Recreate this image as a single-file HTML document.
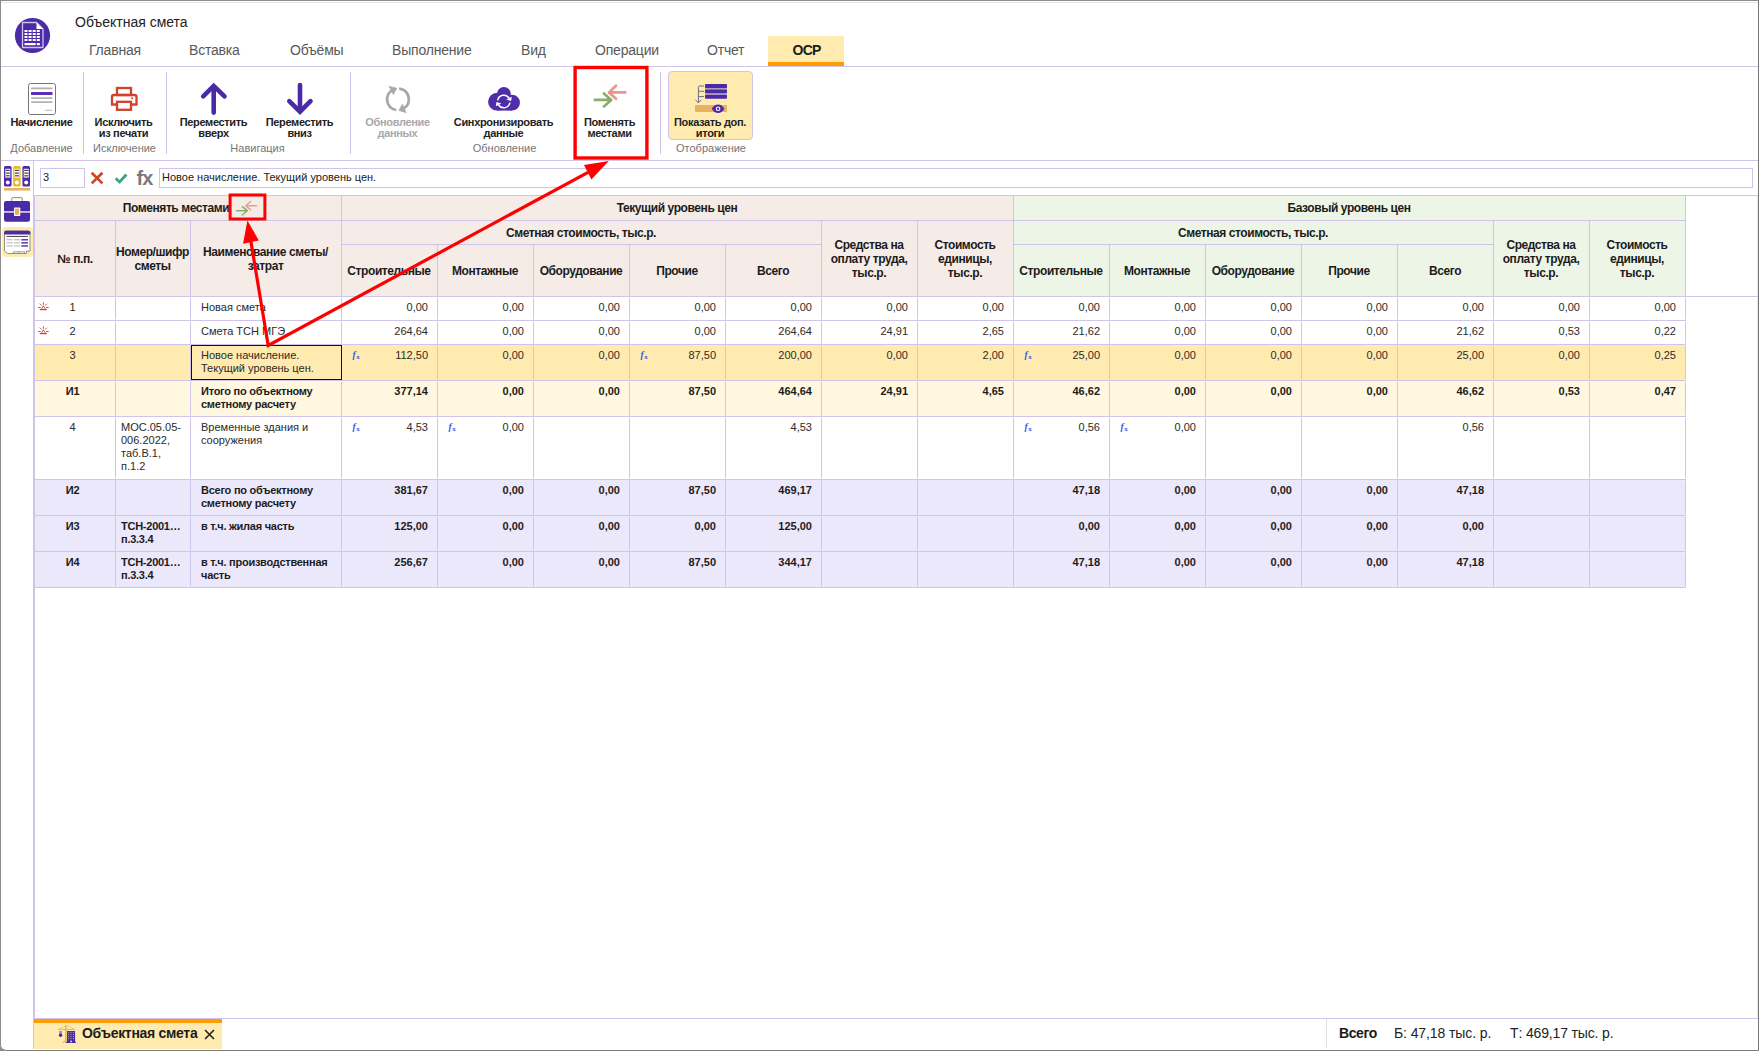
<!DOCTYPE html>
<html lang="ru"><head><meta charset="utf-8"><title>Объектная смета</title>
<style>
*{box-sizing:border-box;margin:0;padding:0}
html,body{width:1759px;height:1051px;overflow:hidden;background:#fff}
body{font-family:"Liberation Sans",sans-serif;color:#1a1a1a;position:relative}
.abs{position:absolute}
.win{position:absolute;left:0;top:0;width:1759px;height:1051px;border:1px solid #8c8c8c;border-right-color:#767676;border-bottom-color:#7c7c7c;border-radius:0 0 0 6px;pointer-events:none;z-index:50}
.hl{position:absolute;height:1px;background:#d0c4ea}
.vl{position:absolute;width:1px;background:#d0c4ea}
.title{position:absolute;left:75px;top:13px;font-size:14px;line-height:18px;color:#222;white-space:nowrap}
.tab{position:absolute;top:41px;font-size:14px;line-height:18px;color:#585858;white-space:nowrap;letter-spacing:-0.2px}
.tabsel{position:absolute;left:768px;top:36px;width:76px;height:30px;background:#ffebaf;border-bottom:4px solid #ff9d00}
.rb{position:absolute;font-size:11px;line-height:11px;font-weight:700;text-align:center;white-space:nowrap;color:#222;letter-spacing:-0.35px;transform:translateX(-50%)}
.rb.dis{color:#a8a8a8}
.rg{position:absolute;font-size:11px;line-height:12px;color:#757575;white-space:nowrap;transform:translateX(-50%)}
.cell{position:absolute;overflow:hidden;font-size:11px;line-height:13px;white-space:nowrap}
.hc{position:absolute;font-size:12px;line-height:14px;font-weight:700;text-align:center;letter-spacing:-0.42px;color:#1c1c1c;display:flex;align-items:center;justify-content:center;white-space:nowrap}
.num{position:absolute;font-size:11px;line-height:13px;text-align:right;white-space:nowrap;color:#2a2a2a}
.txt{position:absolute;font-size:11px;line-height:13px;white-space:nowrap;color:#2a2a2a}
.fxi{position:absolute;font-family:"Liberation Serif",serif;font-weight:700;font-style:italic;color:#2a5cf0;font-size:9.500px;line-height:9px;white-space:nowrap}
.fxi span{font-size:7px;font-style:normal;position:relative;top:1px;left:0.5px}
.b{font-weight:700;letter-spacing:-0.25px;color:#1c1c1c}
.bn{font-weight:700;color:#1c1c1c}
</style></head>
<body>
<div class="hl" style="left:1px;top:2px;width:1757px;background:#e4e4e4"></div>
<svg class="abs" style="left:14px;top:17px" width="37" height="37" viewBox="0 0 37 37">
<circle cx="18.5" cy="18.5" r="17.6" fill="#4b2aa5"/>
<path d="M8.5 5.5h14l6.5 6.5v18.5h-20.5z" fill="#4b2aa5" stroke="#cfc3ee" stroke-width="1.3" stroke-linejoin="round"/>
<path d="M22.5 5.5l6.5 6.500h-6.5z" fill="#fff"/>
<g fill="#fff">
<rect x="10.5" y="13" width="3" height="2"/><rect x="14.6" y="13" width="3" height="2"/><rect x="18.7" y="13" width="3" height="2"/><rect x="22.8" y="13" width="3" height="2"/>
<rect x="10.5" y="16" width="3" height="2"/><rect x="14.6" y="16" width="3" height="2"/><rect x="18.700" y="16" width="3" height="2"/><rect x="22.8" y="16" width="3" height="2"/>
<rect x="10.5" y="19" width="3" height="2"/><rect x="14.6" y="19" width="3" height="2"/><rect x="18.7" y="19" width="3" height="2"/><rect x="22.8" y="19" width="3" height="2"/>
<rect x="10.5" y="22" width="3" height="2"/><rect x="14.6" y="22" width="3" height="2"/><rect x="18.7" y="22" width="3" height="2"/><rect x="22.8" y="22" width="3" height="2"/>
<rect x="10.5" y="26" width="11.2" height="2.200"/><rect x="22.8" y="26" width="3" height="2.2"/>
</g></svg>
<div class="title">Объектная смета</div>
<div class="tabsel"></div>
<div class="tab" style="left:89px">Главная</div>
<div class="tab" style="left:189px">Вставка</div>
<div class="tab" style="left:290px">Объёмы</div>
<div class="tab" style="left:392px">Выполнение</div>
<div class="tab" style="left:521px">Вид</div>
<div class="tab" style="left:595px">Операции</div>
<div class="tab" style="left:707px">Отчет</div>
<div class="tab" style="left:792.500px;font-weight:700;color:#1c1c1c;letter-spacing:-0.7px">ОСР</div>
<div class="hl" style="left:1px;top:66px;width:1757px;background:#d0c4ea"></div>
<div class="hl" style="left:1px;top:160px;width:1757px;background:#d0c4ea"></div>
<div class="vl" style="left:83px;top:72px;height:82px;background:#d0c4ea"></div>
<div class="vl" style="left:166px;top:72px;height:82px;background:#d0c4ea"></div>
<div class="vl" style="left:350px;top:72px;height:82px;background:#d0c4ea"></div>
<div class="vl" style="left:660px;top:72px;height:82px;background:#d0c4ea"></div>
<div class="abs" style="left:668px;top:71px;width:85px;height:69px;background:#ffebaf;border:1px solid #d0c4ea;border-radius:4px"></div>
<div class="rb" style="left:41.5px;top:117px">Начисление</div>
<div class="rb" style="left:123.5px;top:117px">Исключить<br>из печати</div>
<div class="rb" style="left:213.5px;top:117px">Переместить<br>вверх</div>
<div class="rb" style="left:299.5px;top:117px">Переместить<br>вниз</div>
<div class="rb dis" style="left:397.5px;top:117px">Обновление<br>данных</div>
<div class="rb" style="left:503.5px;top:117px">Синхронизировать<br>данные</div>
<div class="rb" style="left:609.5px;top:117px">Поменять<br>местами</div>
<div class="rb" style="left:710px;top:117px">Показать доп.<br>итоги</div>
<div class="rg" style="left:41.5px;top:142px">Добавление</div>
<div class="rg" style="left:124.5px;top:142px">Исключение</div>
<div class="rg" style="left:257.5px;top:142px">Навигация</div>
<div class="rg" style="left:504.5px;top:142px">Обновление</div>
<div class="rg" style="left:711px;top:142px">Отображение</div>
<svg class="abs" style="left:0;top:66px" width="800" height="94" viewBox="0 66 800 94">
<!-- Начисление -->
<rect x="28.5" y="83.500" width="27" height="31" rx="2.2" fill="#fff" stroke="#777" stroke-width="1"/>
<rect x="31" y="87.4" width="21.5" height="1.900" rx=".9" fill="#b0b3b0"/>
<rect x="31" y="92" width="21.5" height="3" rx=".5" fill="#5b2fb5"/>
<rect x="31" y="97.2" width="21.5" height="1.900" rx=".9" fill="#b0b3b0"/>
<rect x="31" y="101.2" width="21.5" height="1.900" rx=".9" fill="#b0b3b0"/>
<rect x="45" y="109.7" width="7.500" height="1.1" rx=".5" fill="#b4b6b4"/>
<!-- printer -->
<g fill="none" stroke="#d0432a" stroke-width="2.300">
<rect x="117" y="88" width="14" height="7"/>
<path d="M117 104.500h-5v-7.500q0-2 2-2h20.5q2 0 2 2v7.5h-5.500"/>
<rect x="117" y="101.800" width="14" height="8" fill="#fff"/>
</g>
<circle cx="132.200" cy="98.3" r="1" fill="#d0432a"/>
<!-- arrows -->
<g fill="none" stroke="#4b2aa5" stroke-width="4.600" stroke-linecap="round" stroke-linejoin="miter">
<path d="M213.700 112.600V88"/><path d="M203.200 96.400L213.700 85.900L224.500 96.400"/>
<path d="M300 85V109"/><path d="M289.300 101.200L300 111.700L310.500 101.200"/>
</g>
<!-- refresh grey -->
<g fill="none" stroke="#a8a8a8" stroke-width="2.700">
<path d="M396.300 110A10.800 10.800 0 0 1 392.300 90.100"/>
<path d="M399.200 88.600A10.800 10.800 0 0 1 403.900 108.400"/>
</g>
<path d="M389 86.300L396.900 88.200L393.300 94.600Z" fill="#a8a8a8" stroke="#a8a8a8" stroke-width=".6" stroke-linejoin="round"/>
<path d="M398.900 110.400L402.400 104.100L406.200 112.700Z" fill="#a8a8a8" stroke="#a8a8a8" stroke-width=".6" stroke-linejoin="round"/>
<!-- cloud -->
<g fill="#4f2ca8">
<circle cx="503.900" cy="93.800" r="6.900"/><circle cx="497" cy="101.700" r="8.900"/><circle cx="512" cy="102.700" r="7.900"/>
<rect x="497" y="100" width="15" height="10.600"/>
</g>
<g fill="none" stroke="#fff" stroke-width="1.500">
<path d="M497.700 100.400A6.200 6.200 0 0 1 509.200 98.400"/>
<path d="M509.900 102.600A6.200 6.200 0 0 1 498.400 104.600"/>
</g>
<path d="M511.700 96.800L511.200 101L506.200 99.500Z" fill="#fff"/>
<path d="M495.900 106.200L496.400 102L501.400 103.500Z" fill="#fff"/>
<!-- swap -->
<g fill="none" stroke-width="2.700" stroke-linecap="round" stroke-linejoin="round">
<path d="M625.300 92.400H609.500M616 85.800L609 92.400L616 98.800" stroke="#e8988b"/>
<path d="M594.800 99.900H611M603.900 93.400L611.200 99.900L603.900 106.400" stroke="#86b06a"/>
</g>
</svg>
<svg class="abs" style="left:690px;top:80px;z-index:3" width="42" height="36" viewBox="690 80 42 36">
<rect x="705" y="84" width="22" height="4.200" rx="1" fill="#4b2aa5"/>
<rect x="705" y="89.300" width="22" height="4.200" rx="1" fill="#4b2aa5"/>
<rect x="705" y="94.600" width="22" height="4.200" rx="1" fill="#4b2aa5"/>
<rect x="705" y="88.200" width="22" height="1.100" fill="#a893c8"/><rect x="705" y="93.500" width="22" height="1.100" fill="#a893c8"/>
<g fill="none" stroke="#6b6c85" stroke-width="1">
<path d="M704 86h-4.200q-1.400 0 -1.400 1.400V102.600M698.400 91.300H704M698.400 96.600H704M695.400 99.800L698.400 102.800L701.400 99.800"/>
</g>
<rect x="695" y="105" width="32" height="7" rx="1" fill="#e8b264"/>
<path d="M711.800 108.700C714.500 103 721.600 103 724.400 108.700C721.600 114.400 714.500 114.400 711.800 108.700z" fill="#4b2aa5"/>
<circle cx="718.100" cy="108.700" r="2.300" fill="#fff"/><circle cx="718.100" cy="108.700" r="1.200" fill="#4b2aa5"/>
</svg>

<div class="vl" style="left:33px;top:160px;height:889px;background:#d0c4ea"></div>
<div class="abs" style="left:1.500px;top:227px;width:31.500px;height:30px;background:#ffebaf;border-radius:4px"></div>
<svg class="abs" style="left:0;top:162px" width="34" height="96" viewBox="0 162 34 96">
<!-- binders -->
<g>
<rect x="4" y="166" width="7.600" height="20.600" rx="1.600" fill="#4b2aa5"/>
<rect x="13.100" y="166" width="7.600" height="20.600" rx="1.600" fill="#e8b92e"/>
<rect x="22.400" y="166" width="7.600" height="20.600" rx="1.600" fill="#4b2aa5"/>
<g fill="#fff"><rect x="5.300" y="168.800" width="5" height="8.800"/><rect x="14.400" y="168.800" width="5" height="8.800"/><rect x="23.700" y="168.800" width="5" height="8.800"/>
<circle cx="7.800" cy="182.600" r="2"/><circle cx="16.900" cy="182.600" r="2"/><circle cx="26.200" cy="182.600" r="2"/></g>
<g fill="#444"><rect x="5.800" y="169.800" width="4" height="1.200"/><rect x="5.800" y="172.500" width="4" height="1.200"/><rect x="5.800" y="175.200" width="4" height="1.200"/>
<rect x="14.900" y="169.800" width="4" height="1.200"/><rect x="14.900" y="172.500" width="4" height="1.200"/><rect x="14.900" y="175.200" width="4" height="1.200"/>
<rect x="24.200" y="169.800" width="4" height="1.200"/><rect x="24.200" y="172.500" width="4" height="1.200"/><rect x="24.200" y="175.200" width="4" height="1.200"/></g>
<rect x="4" y="188" width="26" height="2.600" fill="#e8b264"/>
</g>
<!-- briefcase -->
<path d="M11.700 201v-2.200q0 -1.200 1.200 -1.200h8.200q1.200 0 1.200 1.200v2.200" fill="none" stroke="#8a8a8a" stroke-width="1"/>
<rect x="4" y="201" width="26" height="20.800" rx="2" fill="#4b2aa5"/>
<rect x="4" y="211.300" width="26" height="1.300" fill="#fff"/>
<rect x="14" y="207.400" width="6.300" height="8.600" rx=".8" fill="#fff"/>
<rect x="15" y="208.600" width="4.200" height="6.300" fill="#e8b264"/>
<!-- table window -->
<path d="M4.500 232.500q0 -1.500 1.500 -1.500h22.500q1.500 0 1.500 1.500v18.500h-3.500v2.500h-19l-3 -2.500z" fill="#fff" stroke="#777" stroke-width=".8"/>
<path d="M4.200 234.500v-2.200q0 -1.500 1.500 -1.500h23q1.500 0 1.500 1.500v2.200z" fill="#4b2aa5"/>
<rect x="6.500" y="235.900" width="21.500" height="1.100" fill="#555"/>
<g fill="#b8b8b8"><rect x="6.500" y="239.200" width="6" height="1.100"/><rect x="14" y="239.200" width="6" height="1.100"/><rect x="6.500" y="242.300" width="6" height="1.100"/><rect x="14" y="242.300" width="6" height="1.100"/><rect x="6.500" y="245.400" width="6" height="1.100"/><rect x="14" y="245.400" width="6" height="1.100"/></g>
<g fill="#5b3ab5"><rect x="21.300" y="239" width="6.700" height="1.500"/><rect x="21.300" y="242.100" width="6.700" height="1.500"/><rect x="21.300" y="245.200" width="6.700" height="1.500"/></g>
<path d="M13.500 253.500v-1.700h11v1.700M19 251.800v1.700" fill="none" stroke="#888" stroke-width=".8"/>
</svg>

<div class="abs" style="left:40px;top:168px;width:45px;height:20px;background:#fff;border:1px solid #d0c4ea"></div>
<div class="txt" style="left:43px;top:171px;color:#1a1a1a">3</div>
<div class="abs" style="left:159px;top:168px;width:1594px;height:20px;background:#fff;border:1px solid #d0c4ea"></div>
<div class="txt" style="left:162px;top:171px;color:#1a1a1a">Новое начисление. Текущий уровень цен.</div>
<svg class="abs" style="left:88px;top:168px" width="44" height="20" viewBox="88 168 44 20">
<path d="M91.700 172.700L102.400 183.400M102.400 172.700L91.700 183.400" stroke="#d2432a" stroke-width="2.700" fill="none"/>
<path d="M115.600 178.300L119.600 182L126.400 174.600" stroke="#3fa87b" stroke-width="2.900" fill="none"/>
</svg>
<div class="abs" style="left:136.500px;top:166.500px;font-size:20px;line-height:22px;font-weight:700;color:#7b7b7b;letter-spacing:-0.9px">fx</div>

<div class="abs" style="left:34px;top:196px;width:979px;height:100px;background:#f5ebe7;"></div>
<div class="abs" style="left:1014px;top:196px;width:671px;height:100px;background:#edf5e6;"></div>
<div class="abs" style="left:34px;top:345px;width:1651px;height:35px;background:#ffebaf;"></div>
<div class="abs" style="left:34px;top:381px;width:1651px;height:35px;background:#fff7df;"></div>
<div class="abs" style="left:34px;top:480px;width:1651px;height:35px;background:#ece8fc;"></div>
<div class="abs" style="left:34px;top:516px;width:1651px;height:35px;background:#ece8fc;"></div>
<div class="abs" style="left:34px;top:552px;width:1651px;height:35px;background:#ece8fc;"></div>
<div class="hl" style="left:34px;top:195px;width:1724px;background:#d0c4ea"></div>
<div class="vl" style="left:1757px;top:196px;height:823px;background:rgba(208,196,234,.4)"></div>
<div class="hl" style="left:34px;top:220px;width:1652px;background:#d0c4ea"></div>
<div class="hl" style="left:341px;top:244px;width:480px;background:#d0c4ea"></div>
<div class="hl" style="left:1013px;top:244px;width:480px;background:#d0c4ea"></div>
<div class="hl" style="left:34px;top:296px;width:1725px;background:#d0c4ea"></div>
<div class="hl" style="left:34px;top:320px;width:1652px;background:#d0c4ea"></div>
<div class="hl" style="left:34px;top:344px;width:1652px;background:#d0c4ea"></div>
<div class="hl" style="left:34px;top:380px;width:1652px;background:#d0c4ea"></div>
<div class="hl" style="left:34px;top:416px;width:1652px;background:#d0c4ea"></div>
<div class="hl" style="left:34px;top:479px;width:1652px;background:#d0c4ea"></div>
<div class="hl" style="left:34px;top:515px;width:1652px;background:#d0c4ea"></div>
<div class="hl" style="left:34px;top:551px;width:1652px;background:#d0c4ea"></div>
<div class="hl" style="left:34px;top:587px;width:1652px;background:#d0c4ea"></div>
<div class="hl" style="left:34px;top:1018px;width:1725px;background:#d0c4ea"></div>
<div class="vl" style="left:34px;top:196px;height:823px;background:#d0c4ea"></div>
<div class="vl" style="left:1685px;top:196px;height:100px;background:#d0c4ea"></div>
<div class="vl" style="left:1685px;top:297px;height:290px;background:rgba(208,196,234,.45)"></div>
<div class="vl" style="left:1685px;top:298px;height:21px;background:#d0c4ea"></div>
<div class="vl" style="left:1685px;top:322px;height:21px;background:#d0c4ea"></div>
<div class="vl" style="left:1685px;top:346px;height:33px;background:#d0c4ea"></div>
<div class="vl" style="left:1685px;top:382px;height:33px;background:#d0c4ea"></div>
<div class="vl" style="left:1685px;top:418px;height:60px;background:#d0c4ea"></div>
<div class="vl" style="left:1685px;top:481px;height:33px;background:#d0c4ea"></div>
<div class="vl" style="left:1685px;top:517px;height:33px;background:#d0c4ea"></div>
<div class="vl" style="left:1685px;top:553px;height:33px;background:#d0c4ea"></div>
<div class="vl" style="left:341px;top:196px;height:100px;background:#d0c4ea"></div>
<div class="vl" style="left:341px;top:297px;height:290px;background:rgba(208,196,234,.45)"></div>
<div class="vl" style="left:341px;top:298px;height:21px;background:#d0c4ea"></div>
<div class="vl" style="left:341px;top:322px;height:21px;background:#d0c4ea"></div>
<div class="vl" style="left:341px;top:346px;height:33px;background:#d0c4ea"></div>
<div class="vl" style="left:341px;top:382px;height:33px;background:#d0c4ea"></div>
<div class="vl" style="left:341px;top:418px;height:60px;background:#d0c4ea"></div>
<div class="vl" style="left:341px;top:481px;height:33px;background:#d0c4ea"></div>
<div class="vl" style="left:341px;top:517px;height:33px;background:#d0c4ea"></div>
<div class="vl" style="left:341px;top:553px;height:33px;background:#d0c4ea"></div>
<div class="vl" style="left:1013px;top:196px;height:100px;background:#d0c4ea"></div>
<div class="vl" style="left:1013px;top:297px;height:290px;background:rgba(208,196,234,.45)"></div>
<div class="vl" style="left:1013px;top:298px;height:21px;background:#d0c4ea"></div>
<div class="vl" style="left:1013px;top:322px;height:21px;background:#d0c4ea"></div>
<div class="vl" style="left:1013px;top:346px;height:33px;background:#d0c4ea"></div>
<div class="vl" style="left:1013px;top:382px;height:33px;background:#d0c4ea"></div>
<div class="vl" style="left:1013px;top:418px;height:60px;background:#d0c4ea"></div>
<div class="vl" style="left:1013px;top:481px;height:33px;background:#d0c4ea"></div>
<div class="vl" style="left:1013px;top:517px;height:33px;background:#d0c4ea"></div>
<div class="vl" style="left:1013px;top:553px;height:33px;background:#d0c4ea"></div>
<div class="vl" style="left:115px;top:221px;height:75px;background:#d0c4ea"></div>
<div class="vl" style="left:115px;top:297px;height:290px;background:rgba(208,196,234,.45)"></div>
<div class="vl" style="left:115px;top:298px;height:21px;background:#d0c4ea"></div>
<div class="vl" style="left:115px;top:322px;height:21px;background:#d0c4ea"></div>
<div class="vl" style="left:115px;top:346px;height:33px;background:#d0c4ea"></div>
<div class="vl" style="left:115px;top:382px;height:33px;background:#d0c4ea"></div>
<div class="vl" style="left:115px;top:418px;height:60px;background:#d0c4ea"></div>
<div class="vl" style="left:115px;top:481px;height:33px;background:#d0c4ea"></div>
<div class="vl" style="left:115px;top:517px;height:33px;background:#d0c4ea"></div>
<div class="vl" style="left:115px;top:553px;height:33px;background:#d0c4ea"></div>
<div class="vl" style="left:190px;top:221px;height:75px;background:#d0c4ea"></div>
<div class="vl" style="left:190px;top:297px;height:290px;background:rgba(208,196,234,.45)"></div>
<div class="vl" style="left:190px;top:298px;height:21px;background:#d0c4ea"></div>
<div class="vl" style="left:190px;top:322px;height:21px;background:#d0c4ea"></div>
<div class="vl" style="left:190px;top:346px;height:33px;background:#d0c4ea"></div>
<div class="vl" style="left:190px;top:382px;height:33px;background:#d0c4ea"></div>
<div class="vl" style="left:190px;top:418px;height:60px;background:#d0c4ea"></div>
<div class="vl" style="left:190px;top:481px;height:33px;background:#d0c4ea"></div>
<div class="vl" style="left:190px;top:517px;height:33px;background:#d0c4ea"></div>
<div class="vl" style="left:190px;top:553px;height:33px;background:#d0c4ea"></div>
<div class="vl" style="left:437px;top:245px;height:51px;background:#d0c4ea"></div>
<div class="vl" style="left:437px;top:297px;height:290px;background:rgba(208,196,234,.45)"></div>
<div class="vl" style="left:437px;top:298px;height:21px;background:#d0c4ea"></div>
<div class="vl" style="left:437px;top:322px;height:21px;background:#d0c4ea"></div>
<div class="vl" style="left:437px;top:346px;height:33px;background:#d0c4ea"></div>
<div class="vl" style="left:437px;top:382px;height:33px;background:#d0c4ea"></div>
<div class="vl" style="left:437px;top:418px;height:60px;background:#d0c4ea"></div>
<div class="vl" style="left:437px;top:481px;height:33px;background:#d0c4ea"></div>
<div class="vl" style="left:437px;top:517px;height:33px;background:#d0c4ea"></div>
<div class="vl" style="left:437px;top:553px;height:33px;background:#d0c4ea"></div>
<div class="vl" style="left:533px;top:245px;height:51px;background:#d0c4ea"></div>
<div class="vl" style="left:533px;top:297px;height:290px;background:rgba(208,196,234,.45)"></div>
<div class="vl" style="left:533px;top:298px;height:21px;background:#d0c4ea"></div>
<div class="vl" style="left:533px;top:322px;height:21px;background:#d0c4ea"></div>
<div class="vl" style="left:533px;top:346px;height:33px;background:#d0c4ea"></div>
<div class="vl" style="left:533px;top:382px;height:33px;background:#d0c4ea"></div>
<div class="vl" style="left:533px;top:418px;height:60px;background:#d0c4ea"></div>
<div class="vl" style="left:533px;top:481px;height:33px;background:#d0c4ea"></div>
<div class="vl" style="left:533px;top:517px;height:33px;background:#d0c4ea"></div>
<div class="vl" style="left:533px;top:553px;height:33px;background:#d0c4ea"></div>
<div class="vl" style="left:629px;top:245px;height:51px;background:#d0c4ea"></div>
<div class="vl" style="left:629px;top:297px;height:290px;background:rgba(208,196,234,.45)"></div>
<div class="vl" style="left:629px;top:298px;height:21px;background:#d0c4ea"></div>
<div class="vl" style="left:629px;top:322px;height:21px;background:#d0c4ea"></div>
<div class="vl" style="left:629px;top:346px;height:33px;background:#d0c4ea"></div>
<div class="vl" style="left:629px;top:382px;height:33px;background:#d0c4ea"></div>
<div class="vl" style="left:629px;top:418px;height:60px;background:#d0c4ea"></div>
<div class="vl" style="left:629px;top:481px;height:33px;background:#d0c4ea"></div>
<div class="vl" style="left:629px;top:517px;height:33px;background:#d0c4ea"></div>
<div class="vl" style="left:629px;top:553px;height:33px;background:#d0c4ea"></div>
<div class="vl" style="left:725px;top:245px;height:51px;background:#d0c4ea"></div>
<div class="vl" style="left:725px;top:297px;height:290px;background:rgba(208,196,234,.45)"></div>
<div class="vl" style="left:725px;top:298px;height:21px;background:#d0c4ea"></div>
<div class="vl" style="left:725px;top:322px;height:21px;background:#d0c4ea"></div>
<div class="vl" style="left:725px;top:346px;height:33px;background:#d0c4ea"></div>
<div class="vl" style="left:725px;top:382px;height:33px;background:#d0c4ea"></div>
<div class="vl" style="left:725px;top:418px;height:60px;background:#d0c4ea"></div>
<div class="vl" style="left:725px;top:481px;height:33px;background:#d0c4ea"></div>
<div class="vl" style="left:725px;top:517px;height:33px;background:#d0c4ea"></div>
<div class="vl" style="left:725px;top:553px;height:33px;background:#d0c4ea"></div>
<div class="vl" style="left:821px;top:221px;height:75px;background:#d0c4ea"></div>
<div class="vl" style="left:821px;top:297px;height:290px;background:rgba(208,196,234,.45)"></div>
<div class="vl" style="left:821px;top:298px;height:21px;background:#d0c4ea"></div>
<div class="vl" style="left:821px;top:322px;height:21px;background:#d0c4ea"></div>
<div class="vl" style="left:821px;top:346px;height:33px;background:#d0c4ea"></div>
<div class="vl" style="left:821px;top:382px;height:33px;background:#d0c4ea"></div>
<div class="vl" style="left:821px;top:418px;height:60px;background:#d0c4ea"></div>
<div class="vl" style="left:821px;top:481px;height:33px;background:#d0c4ea"></div>
<div class="vl" style="left:821px;top:517px;height:33px;background:#d0c4ea"></div>
<div class="vl" style="left:821px;top:553px;height:33px;background:#d0c4ea"></div>
<div class="vl" style="left:917px;top:221px;height:75px;background:#d0c4ea"></div>
<div class="vl" style="left:917px;top:297px;height:290px;background:rgba(208,196,234,.45)"></div>
<div class="vl" style="left:917px;top:298px;height:21px;background:#d0c4ea"></div>
<div class="vl" style="left:917px;top:322px;height:21px;background:#d0c4ea"></div>
<div class="vl" style="left:917px;top:346px;height:33px;background:#d0c4ea"></div>
<div class="vl" style="left:917px;top:382px;height:33px;background:#d0c4ea"></div>
<div class="vl" style="left:917px;top:418px;height:60px;background:#d0c4ea"></div>
<div class="vl" style="left:917px;top:481px;height:33px;background:#d0c4ea"></div>
<div class="vl" style="left:917px;top:517px;height:33px;background:#d0c4ea"></div>
<div class="vl" style="left:917px;top:553px;height:33px;background:#d0c4ea"></div>
<div class="vl" style="left:1109px;top:245px;height:51px;background:#d0c4ea"></div>
<div class="vl" style="left:1109px;top:297px;height:290px;background:rgba(208,196,234,.45)"></div>
<div class="vl" style="left:1109px;top:298px;height:21px;background:#d0c4ea"></div>
<div class="vl" style="left:1109px;top:322px;height:21px;background:#d0c4ea"></div>
<div class="vl" style="left:1109px;top:346px;height:33px;background:#d0c4ea"></div>
<div class="vl" style="left:1109px;top:382px;height:33px;background:#d0c4ea"></div>
<div class="vl" style="left:1109px;top:418px;height:60px;background:#d0c4ea"></div>
<div class="vl" style="left:1109px;top:481px;height:33px;background:#d0c4ea"></div>
<div class="vl" style="left:1109px;top:517px;height:33px;background:#d0c4ea"></div>
<div class="vl" style="left:1109px;top:553px;height:33px;background:#d0c4ea"></div>
<div class="vl" style="left:1205px;top:245px;height:51px;background:#d0c4ea"></div>
<div class="vl" style="left:1205px;top:297px;height:290px;background:rgba(208,196,234,.45)"></div>
<div class="vl" style="left:1205px;top:298px;height:21px;background:#d0c4ea"></div>
<div class="vl" style="left:1205px;top:322px;height:21px;background:#d0c4ea"></div>
<div class="vl" style="left:1205px;top:346px;height:33px;background:#d0c4ea"></div>
<div class="vl" style="left:1205px;top:382px;height:33px;background:#d0c4ea"></div>
<div class="vl" style="left:1205px;top:418px;height:60px;background:#d0c4ea"></div>
<div class="vl" style="left:1205px;top:481px;height:33px;background:#d0c4ea"></div>
<div class="vl" style="left:1205px;top:517px;height:33px;background:#d0c4ea"></div>
<div class="vl" style="left:1205px;top:553px;height:33px;background:#d0c4ea"></div>
<div class="vl" style="left:1301px;top:245px;height:51px;background:#d0c4ea"></div>
<div class="vl" style="left:1301px;top:297px;height:290px;background:rgba(208,196,234,.45)"></div>
<div class="vl" style="left:1301px;top:298px;height:21px;background:#d0c4ea"></div>
<div class="vl" style="left:1301px;top:322px;height:21px;background:#d0c4ea"></div>
<div class="vl" style="left:1301px;top:346px;height:33px;background:#d0c4ea"></div>
<div class="vl" style="left:1301px;top:382px;height:33px;background:#d0c4ea"></div>
<div class="vl" style="left:1301px;top:418px;height:60px;background:#d0c4ea"></div>
<div class="vl" style="left:1301px;top:481px;height:33px;background:#d0c4ea"></div>
<div class="vl" style="left:1301px;top:517px;height:33px;background:#d0c4ea"></div>
<div class="vl" style="left:1301px;top:553px;height:33px;background:#d0c4ea"></div>
<div class="vl" style="left:1397px;top:245px;height:51px;background:#d0c4ea"></div>
<div class="vl" style="left:1397px;top:297px;height:290px;background:rgba(208,196,234,.45)"></div>
<div class="vl" style="left:1397px;top:298px;height:21px;background:#d0c4ea"></div>
<div class="vl" style="left:1397px;top:322px;height:21px;background:#d0c4ea"></div>
<div class="vl" style="left:1397px;top:346px;height:33px;background:#d0c4ea"></div>
<div class="vl" style="left:1397px;top:382px;height:33px;background:#d0c4ea"></div>
<div class="vl" style="left:1397px;top:418px;height:60px;background:#d0c4ea"></div>
<div class="vl" style="left:1397px;top:481px;height:33px;background:#d0c4ea"></div>
<div class="vl" style="left:1397px;top:517px;height:33px;background:#d0c4ea"></div>
<div class="vl" style="left:1397px;top:553px;height:33px;background:#d0c4ea"></div>
<div class="vl" style="left:1493px;top:221px;height:75px;background:#d0c4ea"></div>
<div class="vl" style="left:1493px;top:297px;height:290px;background:rgba(208,196,234,.45)"></div>
<div class="vl" style="left:1493px;top:298px;height:21px;background:#d0c4ea"></div>
<div class="vl" style="left:1493px;top:322px;height:21px;background:#d0c4ea"></div>
<div class="vl" style="left:1493px;top:346px;height:33px;background:#d0c4ea"></div>
<div class="vl" style="left:1493px;top:382px;height:33px;background:#d0c4ea"></div>
<div class="vl" style="left:1493px;top:418px;height:60px;background:#d0c4ea"></div>
<div class="vl" style="left:1493px;top:481px;height:33px;background:#d0c4ea"></div>
<div class="vl" style="left:1493px;top:517px;height:33px;background:#d0c4ea"></div>
<div class="vl" style="left:1493px;top:553px;height:33px;background:#d0c4ea"></div>
<div class="vl" style="left:1589px;top:221px;height:75px;background:#d0c4ea"></div>
<div class="vl" style="left:1589px;top:297px;height:290px;background:rgba(208,196,234,.45)"></div>
<div class="vl" style="left:1589px;top:298px;height:21px;background:#d0c4ea"></div>
<div class="vl" style="left:1589px;top:322px;height:21px;background:#d0c4ea"></div>
<div class="vl" style="left:1589px;top:346px;height:33px;background:#d0c4ea"></div>
<div class="vl" style="left:1589px;top:382px;height:33px;background:#d0c4ea"></div>
<div class="vl" style="left:1589px;top:418px;height:60px;background:#d0c4ea"></div>
<div class="vl" style="left:1589px;top:481px;height:33px;background:#d0c4ea"></div>
<div class="vl" style="left:1589px;top:517px;height:33px;background:#d0c4ea"></div>
<div class="vl" style="left:1589px;top:553px;height:33px;background:#d0c4ea"></div>
<div class="hc" style="left:34px;top:196px;width:307px;height:24px"><span style="margin-left:-23px">Поменять местами</span></div>
<div class="hc" style="left:341px;top:196px;width:672px;height:24px">Текущий уровень цен</div>
<div class="hc" style="left:1013px;top:196px;width:672px;height:24px">Базовый уровень цен</div>
<div class="hc" style="left:341px;top:221px;width:480px;height:24px">Сметная стоимость, тыс.р.</div>
<div class="hc" style="left:1013px;top:221px;width:480px;height:24px">Сметная стоимость, тыс.р.</div>
<div class="hc" style="left:35px;top:221px;width:80px;height:76px">№ п.п.</div>
<div class="hc" style="left:115px;top:221px;width:75px;height:76px">Номер/шифр<br>сметы</div>
<div class="hc" style="left:190px;top:221px;width:151px;height:76px">Наименование сметы/<br>затрат</div>
<div class="hc" style="left:341px;top:245px;width:96px;height:52px">Строительные</div>
<div class="hc" style="left:437px;top:245px;width:96px;height:52px">Монтажные</div>
<div class="hc" style="left:533px;top:245px;width:96px;height:52px">Оборудование</div>
<div class="hc" style="left:629px;top:245px;width:96px;height:52px">Прочие</div>
<div class="hc" style="left:725px;top:245px;width:96px;height:52px">Всего</div>
<div class="hc" style="left:821px;top:221px;width:96px;height:76px">Средства на<br>оплату труда,<br>тыс.р.</div>
<div class="hc" style="left:917px;top:221px;width:96px;height:76px">Стоимость<br>единицы,<br>тыс.р.</div>
<div class="hc" style="left:1013px;top:245px;width:96px;height:52px">Строительные</div>
<div class="hc" style="left:1109px;top:245px;width:96px;height:52px">Монтажные</div>
<div class="hc" style="left:1205px;top:245px;width:96px;height:52px">Оборудование</div>
<div class="hc" style="left:1301px;top:245px;width:96px;height:52px">Прочие</div>
<div class="hc" style="left:1397px;top:245px;width:96px;height:52px">Всего</div>
<div class="hc" style="left:1493px;top:221px;width:96px;height:76px">Средства на<br>оплату труда,<br>тыс.р.</div>
<div class="hc" style="left:1589px;top:221px;width:96px;height:76px">Стоимость<br>единицы,<br>тыс.р.</div>
<div class="txt" style="left:35px;top:301px;width:75px;text-align:center">1</div>
<div class="txt" style="left:201px;top:301px">Новая смета</div>
<div class="num" style="left:347px;width:81px;top:301px">0,00</div>
<div class="num" style="left:443px;width:81px;top:301px">0,00</div>
<div class="num" style="left:539px;width:81px;top:301px">0,00</div>
<div class="num" style="left:635px;width:81px;top:301px">0,00</div>
<div class="num" style="left:731px;width:81px;top:301px">0,00</div>
<div class="num" style="left:827px;width:81px;top:301px">0,00</div>
<div class="num" style="left:923px;width:81px;top:301px">0,00</div>
<div class="num" style="left:1019px;width:81px;top:301px">0,00</div>
<div class="num" style="left:1115px;width:81px;top:301px">0,00</div>
<div class="num" style="left:1211px;width:81px;top:301px">0,00</div>
<div class="num" style="left:1307px;width:81px;top:301px">0,00</div>
<div class="num" style="left:1403px;width:81px;top:301px">0,00</div>
<div class="num" style="left:1499px;width:81px;top:301px">0,00</div>
<div class="num" style="left:1595px;width:81px;top:301px">0,00</div>
<div class="txt" style="left:35px;top:325px;width:75px;text-align:center">2</div>
<div class="txt" style="left:201px;top:325px">Смета ТСН МГЭ</div>
<div class="num" style="left:347px;width:81px;top:325px">264,64</div>
<div class="num" style="left:443px;width:81px;top:325px">0,00</div>
<div class="num" style="left:539px;width:81px;top:325px">0,00</div>
<div class="num" style="left:635px;width:81px;top:325px">0,00</div>
<div class="num" style="left:731px;width:81px;top:325px">264,64</div>
<div class="num" style="left:827px;width:81px;top:325px">24,91</div>
<div class="num" style="left:923px;width:81px;top:325px">2,65</div>
<div class="num" style="left:1019px;width:81px;top:325px">21,62</div>
<div class="num" style="left:1115px;width:81px;top:325px">0,00</div>
<div class="num" style="left:1211px;width:81px;top:325px">0,00</div>
<div class="num" style="left:1307px;width:81px;top:325px">0,00</div>
<div class="num" style="left:1403px;width:81px;top:325px">21,62</div>
<div class="num" style="left:1499px;width:81px;top:325px">0,53</div>
<div class="num" style="left:1595px;width:81px;top:325px">0,22</div>
<div class="txt" style="left:35px;top:349px;width:75px;text-align:center">3</div>
<div class="txt" style="left:201px;top:349px">Новое начисление.<br>Текущий уровень цен.</div>
<div class="num" style="left:347px;width:81px;top:349px">112,50</div>
<div class="num" style="left:443px;width:81px;top:349px">0,00</div>
<div class="num" style="left:539px;width:81px;top:349px">0,00</div>
<div class="num" style="left:635px;width:81px;top:349px">87,50</div>
<div class="num" style="left:731px;width:81px;top:349px">200,00</div>
<div class="num" style="left:827px;width:81px;top:349px">0,00</div>
<div class="num" style="left:923px;width:81px;top:349px">2,00</div>
<div class="num" style="left:1019px;width:81px;top:349px">25,00</div>
<div class="num" style="left:1115px;width:81px;top:349px">0,00</div>
<div class="num" style="left:1211px;width:81px;top:349px">0,00</div>
<div class="num" style="left:1307px;width:81px;top:349px">0,00</div>
<div class="num" style="left:1403px;width:81px;top:349px">25,00</div>
<div class="num" style="left:1499px;width:81px;top:349px">0,00</div>
<div class="num" style="left:1595px;width:81px;top:349px">0,25</div>
<div class="txt b" style="left:35px;top:385px;width:75px;text-align:center">И1</div>
<div class="txt b" style="left:201px;top:385px">Итого по объектному<br>сметному расчету</div>
<div class="num bn" style="left:347px;width:81px;top:385px">377,14</div>
<div class="num bn" style="left:443px;width:81px;top:385px">0,00</div>
<div class="num bn" style="left:539px;width:81px;top:385px">0,00</div>
<div class="num bn" style="left:635px;width:81px;top:385px">87,50</div>
<div class="num bn" style="left:731px;width:81px;top:385px">464,64</div>
<div class="num bn" style="left:827px;width:81px;top:385px">24,91</div>
<div class="num bn" style="left:923px;width:81px;top:385px">4,65</div>
<div class="num bn" style="left:1019px;width:81px;top:385px">46,62</div>
<div class="num bn" style="left:1115px;width:81px;top:385px">0,00</div>
<div class="num bn" style="left:1211px;width:81px;top:385px">0,00</div>
<div class="num bn" style="left:1307px;width:81px;top:385px">0,00</div>
<div class="num bn" style="left:1403px;width:81px;top:385px">46,62</div>
<div class="num bn" style="left:1499px;width:81px;top:385px">0,53</div>
<div class="num bn" style="left:1595px;width:81px;top:385px">0,47</div>
<div class="txt" style="left:35px;top:421px;width:75px;text-align:center">4</div>
<div class="txt" style="left:121px;top:421px">МОС.05.05-<br>006.2022,<br>таб.В.1,<br>п.1.2</div>
<div class="txt" style="left:201px;top:421px">Временные здания и<br>сооружения</div>
<div class="num" style="left:347px;width:81px;top:421px">4,53</div>
<div class="num" style="left:443px;width:81px;top:421px">0,00</div>
<div class="num" style="left:731px;width:81px;top:421px">4,53</div>
<div class="num" style="left:1019px;width:81px;top:421px">0,56</div>
<div class="num" style="left:1115px;width:81px;top:421px">0,00</div>
<div class="num" style="left:1403px;width:81px;top:421px">0,56</div>
<div class="txt b" style="left:35px;top:484px;width:75px;text-align:center">И2</div>
<div class="txt b" style="left:201px;top:484px">Всего по объектному<br>сметному расчету</div>
<div class="num bn" style="left:347px;width:81px;top:484px">381,67</div>
<div class="num bn" style="left:443px;width:81px;top:484px">0,00</div>
<div class="num bn" style="left:539px;width:81px;top:484px">0,00</div>
<div class="num bn" style="left:635px;width:81px;top:484px">87,50</div>
<div class="num bn" style="left:731px;width:81px;top:484px">469,17</div>
<div class="num bn" style="left:1019px;width:81px;top:484px">47,18</div>
<div class="num bn" style="left:1115px;width:81px;top:484px">0,00</div>
<div class="num bn" style="left:1211px;width:81px;top:484px">0,00</div>
<div class="num bn" style="left:1307px;width:81px;top:484px">0,00</div>
<div class="num bn" style="left:1403px;width:81px;top:484px">47,18</div>
<div class="txt b" style="left:35px;top:520px;width:75px;text-align:center">И3</div>
<div class="txt b" style="left:121px;top:520px">ТСН-2001…<br>п.3.3.4</div>
<div class="txt b" style="left:201px;top:520px">в т.ч. жилая часть</div>
<div class="num bn" style="left:347px;width:81px;top:520px">125,00</div>
<div class="num bn" style="left:443px;width:81px;top:520px">0,00</div>
<div class="num bn" style="left:539px;width:81px;top:520px">0,00</div>
<div class="num bn" style="left:635px;width:81px;top:520px">0,00</div>
<div class="num bn" style="left:731px;width:81px;top:520px">125,00</div>
<div class="num bn" style="left:1019px;width:81px;top:520px">0,00</div>
<div class="num bn" style="left:1115px;width:81px;top:520px">0,00</div>
<div class="num bn" style="left:1211px;width:81px;top:520px">0,00</div>
<div class="num bn" style="left:1307px;width:81px;top:520px">0,00</div>
<div class="num bn" style="left:1403px;width:81px;top:520px">0,00</div>
<div class="txt b" style="left:35px;top:556px;width:75px;text-align:center">И4</div>
<div class="txt b" style="left:121px;top:556px">ТСН-2001…<br>п.3.3.4</div>
<div class="txt b" style="left:201px;top:556px">в т.ч. производственная<br>часть</div>
<div class="num bn" style="left:347px;width:81px;top:556px">256,67</div>
<div class="num bn" style="left:443px;width:81px;top:556px">0,00</div>
<div class="num bn" style="left:539px;width:81px;top:556px">0,00</div>
<div class="num bn" style="left:635px;width:81px;top:556px">87,50</div>
<div class="num bn" style="left:731px;width:81px;top:556px">344,17</div>
<div class="num bn" style="left:1019px;width:81px;top:556px">47,18</div>
<div class="num bn" style="left:1115px;width:81px;top:556px">0,00</div>
<div class="num bn" style="left:1211px;width:81px;top:556px">0,00</div>
<div class="num bn" style="left:1307px;width:81px;top:556px">0,00</div>
<div class="num bn" style="left:1403px;width:81px;top:556px">47,18</div>
<div class="abs" style="left:191px;top:345px;width:151px;height:35px;border:1px solid #111"></div>
<svg class="abs" style="left:36px;top:298px" width="16" height="44" viewBox="36 298 16 44"><g stroke="#d4432b" stroke-width="1" fill="none"><path d="M39.9 309.6H46.9" stroke-width="1.200"/><path d="M41.4 309.3L43.4 305.8L45.4 309.3" stroke-width=".9"/><path d="M43.4 302.2V304.8M39.9 303.7L41.6 305.4M46.9 303.7L45.2 305.4M38.1 307.5H40.6M48.7 307.5H46.2" stroke-width=".9"/></g><g stroke="#d4432b" stroke-width="1" fill="none"><path d="M39.9 333.6H46.9" stroke-width="1.200"/><path d="M41.4 333.3L43.4 329.8L45.4 333.3" stroke-width=".9"/><path d="M43.4 326.2V328.8M39.9 327.7L41.6 329.4M46.9 327.7L45.2 329.4M38.1 331.5H40.6M48.7 331.5H46.2" stroke-width=".9"/></g></svg>
<div class="fxi" style="left:352.5px;top:351px"><i>f</i><span>x</span></div>
<div class="fxi" style="left:640.5px;top:351px"><i>f</i><span>x</span></div>
<div class="fxi" style="left:1024.5px;top:351px"><i>f</i><span>x</span></div>
<div class="fxi" style="left:352.5px;top:423px"><i>f</i><span>x</span></div>
<div class="fxi" style="left:448.5px;top:423px"><i>f</i><span>x</span></div>
<div class="fxi" style="left:1024.5px;top:423px"><i>f</i><span>x</span></div>
<div class="fxi" style="left:1120.5px;top:423px"><i>f</i><span>x</span></div>
<svg class="abs" style="left:233px;top:198px" width="28" height="20" viewBox="233 198 28 20">
<g fill="none" stroke-width="1.500" stroke-linecap="round" stroke-linejoin="round">
<path d="M256.500 205.800H246M250.500 201.500L245.800 205.800L250.500 209.700" stroke="#e8a094"/>
<path d="M236.500 210.700H247M242.300 206.700L247.300 210.700L242.300 215" stroke="#86b06a"/>
</g></svg>
<div class="abs" style="left:34px;top:1019px;width:188px;height:30px;background:#ffebaf;border-top:4px solid #ff9d00"></div>
<div class="abs b" style="left:82px;top:1024px;font-size:14px;line-height:18px;font-weight:700;letter-spacing:-0.3px;white-space:nowrap">Объектная смета</div>
<svg class="abs" style="left:204px;top:1028.500px" width="11" height="11" viewBox="0 0 11 11"><path d="M1 1l9 9M10 1l-9 9" stroke="#222" stroke-width="1.6" fill="none"/></svg>
<div class="vl" style="left:1326px;top:1019px;height:29px;background:#e0e0e0"></div>
<div class="abs" style="left:1339px;top:1024px;font-size:14px;line-height:18px;font-weight:700;letter-spacing:-0.4px;white-space:nowrap">Всего</div>
<div class="abs" style="left:1394px;top:1024px;font-size:14px;line-height:18px;white-space:nowrap;color:#222;letter-spacing:-0.1px">Б: 47,18 тыс. р.</div>
<div class="abs" style="left:1510px;top:1024px;font-size:14px;line-height:18px;white-space:nowrap;color:#222;letter-spacing:-0.15px">Т: 469,17 тыс. р.</div>
<svg class="abs" style="left:56px;top:1024px" width="22" height="20" viewBox="56 1024 22 20">
<g fill="none" stroke="#e6b762" stroke-width="1">
<path d="M58.200 1029.500H74.800" stroke-width="1.100"/>
<path d="M58.600 1029.300L67 1025.300L74.500 1029.300" stroke-width=".8" stroke-dasharray="2.200 .5"/>
<path d="M65.800 1025.200V1043" stroke-width="1.600"/>
<path d="M63 1042.800L65.500 1040.500" stroke-width="1.200"/>
</g>
<rect x="59.300" y="1031" width="2.600" height="3.500" fill="#9b86d0"/>
<circle cx="60.600" cy="1035.200" r="1.700" fill="#4b2aa5"/>
<rect x="67" y="1031" width="8.100" height="12" fill="#4b2aa5"/>
<rect x="66.100" y="1041.800" width="9.800" height="1.200" fill="#4b2aa5"/>
<g fill="#d9c08e">
<rect x="68.200" y="1032.200" width=".9" height=".9"/><rect x="70.600" y="1032.200" width=".9" height=".9"/><rect x="73" y="1032.200" width=".9" height=".9"/>
<rect x="68.200" y="1034.200" width=".9" height=".9"/><rect x="70.600" y="1034.200" width=".9" height=".9"/><rect x="73" y="1034.200" width=".9" height=".9"/>
<rect x="68.200" y="1036.200" width=".9" height=".9"/><rect x="70.600" y="1036.200" width=".9" height=".9"/><rect x="73" y="1036.200" width=".9" height=".9"/>
<rect x="68.200" y="1038.200" width=".9" height=".9"/><rect x="70.600" y="1038.200" width=".9" height=".9"/><rect x="73" y="1038.200" width=".9" height=".9"/>
</g>
<rect x="70.300" y="1040.600" width="1.600" height="1.700" rx=".6" fill="#ffebaf"/>
</svg>

<svg class="abs" style="left:0;top:0;z-index:40" width="1759" height="1051" viewBox="0 0 1759 1051">
<rect x="575.100" y="67.500" width="71.800" height="90.500" fill="none" stroke="#f00" stroke-width="3.400"/>
<rect x="230.100" y="195" width="34.800" height="24" fill="none" stroke="#f00" stroke-width="3"/>
<g stroke="#f00" stroke-width="3" fill="#f00" stroke-linejoin="miter">
<path d="M588 172.300L268.200 345.500L251 242" fill="none" stroke-width="3.200" stroke-linejoin="miter"/>
<polygon points="608.800,161 584,165.100 591.400,179.400" stroke="none"/>
<polygon points="247.400,220.600 243.100,243.700 258.800,240.500" stroke="none"/>
</g></svg>
<svg class="abs" style="left:0;top:1044px;z-index:51" width="7" height="7" viewBox="0 0 7 7"><path d="M0 0V7H7A7 7 0 0 1 0 0z" fill="#878a90"/></svg>
<div class="win"></div>
</body></html>
